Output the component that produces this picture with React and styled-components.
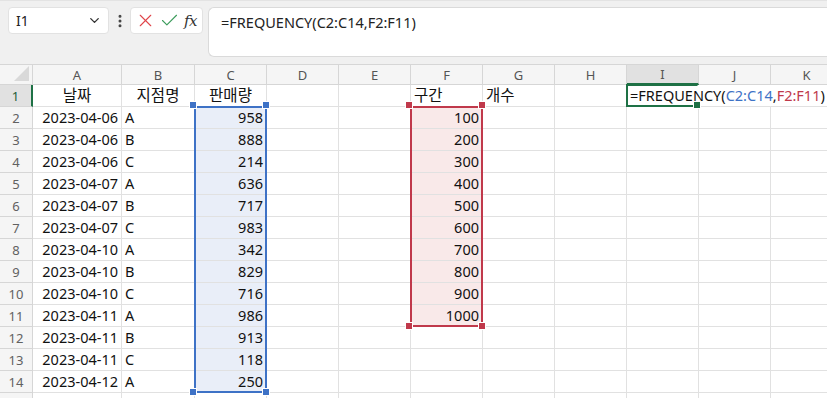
import React from "react";
import styled, { createGlobalStyle } from "styled-components";
import { ChevronDown, EllipsisVertical, X, Check } from "lucide-react";

const GlobalStyle = createGlobalStyle`
  body {
    margin: 0;
    background: #fff;
    font-family: "Noto Sans", "Noto Sans CJK KR", sans-serif;
    overflow: hidden;
  }
`;

const COLS = ["A", "B", "C", "D", "E", "F", "G", "H", "I", "J", "K"];
const WIDTHS = [89, 73, 72, 72, 72, 72, 72, 72, 72, 72, 72];
const HEAD_W = 33;
const HEAD_H = 21;
const ROW_H = 22;

const BLUE = "#3e72c6";
const RED = "#c0394b";
const GREEN = "#1e7145";

const data = [
  ["2023-04-06", "A", 958],
  ["2023-04-06", "B", 888],
  ["2023-04-06", "C", 214],
  ["2023-04-07", "A", 636],
  ["2023-04-07", "B", 717],
  ["2023-04-07", "C", 983],
  ["2023-04-10", "A", 342],
  ["2023-04-10", "B", 829],
  ["2023-04-10", "C", 716],
  ["2023-04-11", "A", 986],
  ["2023-04-11", "B", 913],
  ["2023-04-11", "C", 118],
  ["2023-04-12", "A", 250],
];
const bins = [100, 200, 300, 400, 500, 600, 700, 800, 900, 1000];

const colLeft = (i) => HEAD_W + WIDTHS.slice(0, i).reduce((a, b) => a + b, 0);
const rowTop = (r) => HEAD_H + (r - 1) * ROW_H;

const Page = styled.div`
  width: 827px;
  height: 398px;
  overflow: hidden;
  display: flex;
  flex-direction: column;
`;

const Toolbar = styled.div`
  height: 64px;
  flex: none;
  background: #f0f0f0;
  border-top: 1px solid #e3e3e3;
  box-sizing: border-box;
  display: flex;
  align-items: flex-start;
  padding: 6px 0 0 8px;
`;

const NameBox = styled.div`
  width: 101px;
  height: 27px;
  box-sizing: border-box;
  background: #fff;
  border: 1px solid #e2e2e2;
  border-radius: 4px;
  display: flex;
  align-items: center;
  justify-content: space-between;
  padding: 0 6px 0 7px;
  font-size: 14px;
  color: #222;
`;

const Dots = styled.div`
  width: 21px;
  height: 27px;
  display: flex;
  align-items: center;
  justify-content: center;
  color: #444;
`;

const FxGroup = styled.div`
  width: 73px;
  height: 27px;
  box-sizing: border-box;
  background: #fff;
  border: 1px solid #e2e2e2;
  border-radius: 4px;
  display: flex;
  align-items: center;
  justify-content: space-between;
  padding: 0 5px 0 4px;
`;

const FxText = styled.span`
  font-family: "DejaVu Serif", "Liberation Serif", serif;
  font-style: italic;
  font-size: 15px;
  color: #333;
  letter-spacing: -0.5px;
`;

const FormulaInput = styled.div`
  flex: 1;
  margin-left: 5px;
  height: 50px;
  box-sizing: border-box;
  background: #fff;
  border: 1px solid #dadada;
  border-right: none;
  border-radius: 6px 0 0 6px;
  padding: 3px 0 0 12px;
  font-size: 14.5px;
  color: #222;
  line-height: 22px;
`;

const Sheet = styled.div`
  position: relative;
  display: grid;
  grid-template-columns: ${HEAD_W}px ${WIDTHS.map((w) => `${w}px`).join(" ")};
  grid-template-rows: ${HEAD_H}px;
  grid-auto-rows: ${ROW_H}px;
  width: max-content;
`;

const Corner = styled.div`
  background: #f5f5f5;
  border-right: 1px solid #d6d6d6;
  border-bottom: 1px solid #d6d6d6;
  border-top: 1px solid #d6d6d6;
  box-sizing: border-box;
  display: flex;
  align-items: flex-end;
  justify-content: flex-end;
  padding: 0 3px 3px 0;
`;

const ColHead = styled.div`
  box-sizing: border-box;
  background: ${(p) => (p.$active ? "#e1e1e1" : "#f5f5f5")};
  border-top: 1px solid #d6d6d6;
  border-right: 1px solid #d6d6d6;
  border-bottom: ${(p) => (p.$active ? `2px solid ${GREEN}` : "1px solid #d6d6d6")};
  font-size: 13px;
  color: #555;
  display: flex;
  align-items: center;
  justify-content: center;
`;

const RowHead = styled.div`
  box-sizing: border-box;
  background: ${(p) => (p.$active ? "#e1e1e1" : "#f5f5f5")};
  border-bottom: 1px solid #d6d6d6;
  border-right: ${(p) => (p.$active ? `2px solid ${GREEN}` : "1px solid #d6d6d6")};
  font-size: 13px;
  color: ${(p) => (p.$active ? "#1b5e38" : "#616161")};
  display: flex;
  align-items: center;
  justify-content: center;
`;

const Cell = styled.div`
  position: relative;
  box-sizing: border-box;
  background: ${(p) => p.$tint || "#fff"};
  border-right: ${(p) => (p.$open ? "none" : "1px solid #e1e1e1")};
  border-bottom: 1px solid #e1e1e1;
  font-size: ${(p) => (p.$kr ? "15.5px" : "14.5px")};
  color: #111;
  line-height: 21px;
  padding: 0 3px;
  white-space: nowrap;
  text-align: ${(p) => p.$align || "left"};
  overflow: ${(p) => (p.$spill ? "visible" : "hidden")};
  z-index: ${(p) => (p.$spill ? 2 : "auto")};
`;

const Range = styled.div`
  position: absolute;
  box-sizing: border-box;
  border: 2px solid ${(p) => p.$color};
  border-right-color: ${(p) => (p.$open ? "transparent" : p.$color)};
  pointer-events: none;
  z-index: 3;
`;

const Handle = styled.span`
  position: absolute;
  width: 6px;
  height: 6px;
  background: ${(p) => p.$color};
  outline: 1px solid #fff;
`;

const Ref = styled.span`
  color: ${(p) => p.$color};
`;

const Formula = ({ inCell }) => (
  <>
    =FREQUENCY(
    {inCell ? <Ref $color={BLUE}>C2:C14</Ref> : "C2:C14"},
    {inCell ? <Ref $color={RED}>F2:F11</Ref> : "F2:F11"})
  </>
);

const Box = ({ c0, r0, c1, r1, color, handles, open }) => {
  const left = colLeft(c0) - 1;
  const top = rowTop(r0) - 1;
  const width = colLeft(c1 + 1) - colLeft(c0) + 1;
  const height = rowTop(r1 + 1) - rowTop(r0) + 1;
  const corners =
    handles === "all"
      ? [[-4, -4], [width - 4, -4], [-4, height - 4], [width - 4, height - 4]]
      : [[width - 5, height - 5]];
  return (
    <Range $color={color} $open={open} style={{ left, top, width, height }}>
      {corners.map(([x, y], i) => (
        <Handle key={i} $color={color} style={{ left: x - 2, top: y - 2 }} />
      ))}
    </Range>
  );
};

function rowCells(r) {
  if (r === 1) {
    return [
      { v: "날짜", a: "center", kr: true },
      { v: "지점명", a: "center", kr: true },
      { v: "판매량", a: "center", kr: true },
      {}, {},
      { v: "구간", kr: true },
      { v: "개수", kr: true },
      {},
      { v: <Formula inCell />, spill: true, open: true },
      { open: true },
      {},
    ];
  }
  const d = data[r - 2];
  const b = bins[r - 2];
  return [
    d ? { v: d[0], a: "right" } : {},
    d ? { v: d[1] } : {},
    d ? { v: d[2], a: "right", tint: "#e9eef8" } : {},
    {}, {},
    b ? { v: b, a: "right", tint: "#f9e9e9" } : {},
    {}, {}, {}, {}, {},
  ];
}

export default function App() {
  const rows = Array.from({ length: 15 }, (_, i) => i + 1);
  return (
    <Page>
      <GlobalStyle />
      <Toolbar>
        <NameBox>
          <span>I1</span>
          <ChevronDown size={15} strokeWidth={2.2} color="#333" />
        </NameBox>
        <Dots>
          <EllipsisVertical size={16} strokeWidth={2.5} />
        </Dots>
        <FxGroup>
          <X size={21} strokeWidth={1.3} color="#e0454a" />
          <Check size={21} strokeWidth={1.3} color="#3c9c5c" />
          <FxText>fx</FxText>
        </FxGroup>
        <FormulaInput>
          <Formula />
        </FormulaInput>
      </Toolbar>
      <Sheet>
        <Corner>
          <svg width="15" height="15" viewBox="0 0 15 15">
            <polygon points="15,0 15,15 0,15" fill="#d9d9d9" />
          </svg>
        </Corner>
        {COLS.map((c) => (
          <ColHead key={c} $active={c === "I"}>{c}</ColHead>
        ))}
        {rows.map((r) => (
          <React.Fragment key={r}>
            <RowHead $active={r === 1}>{r < 15 ? r : ""}</RowHead>
            {rowCells(r).map((cell, i) => (
              <Cell
                key={i}
                $align={cell.a}
                $tint={cell.tint}
                $spill={cell.spill}
                $open={cell.open}
                $kr={cell.kr}
              >
                {cell.v}
              </Cell>
            ))}
          </React.Fragment>
        ))}
        <Box c0={2} r0={2} c1={2} r1={14} color={BLUE} handles="all" />
        <Box c0={5} r0={2} c1={5} r1={11} color={RED} handles="all" />
        <Box c0={8} r0={1} c1={8} r1={1} color={GREEN} handles="one" open />
      </Sheet>
    </Page>
  );
}
